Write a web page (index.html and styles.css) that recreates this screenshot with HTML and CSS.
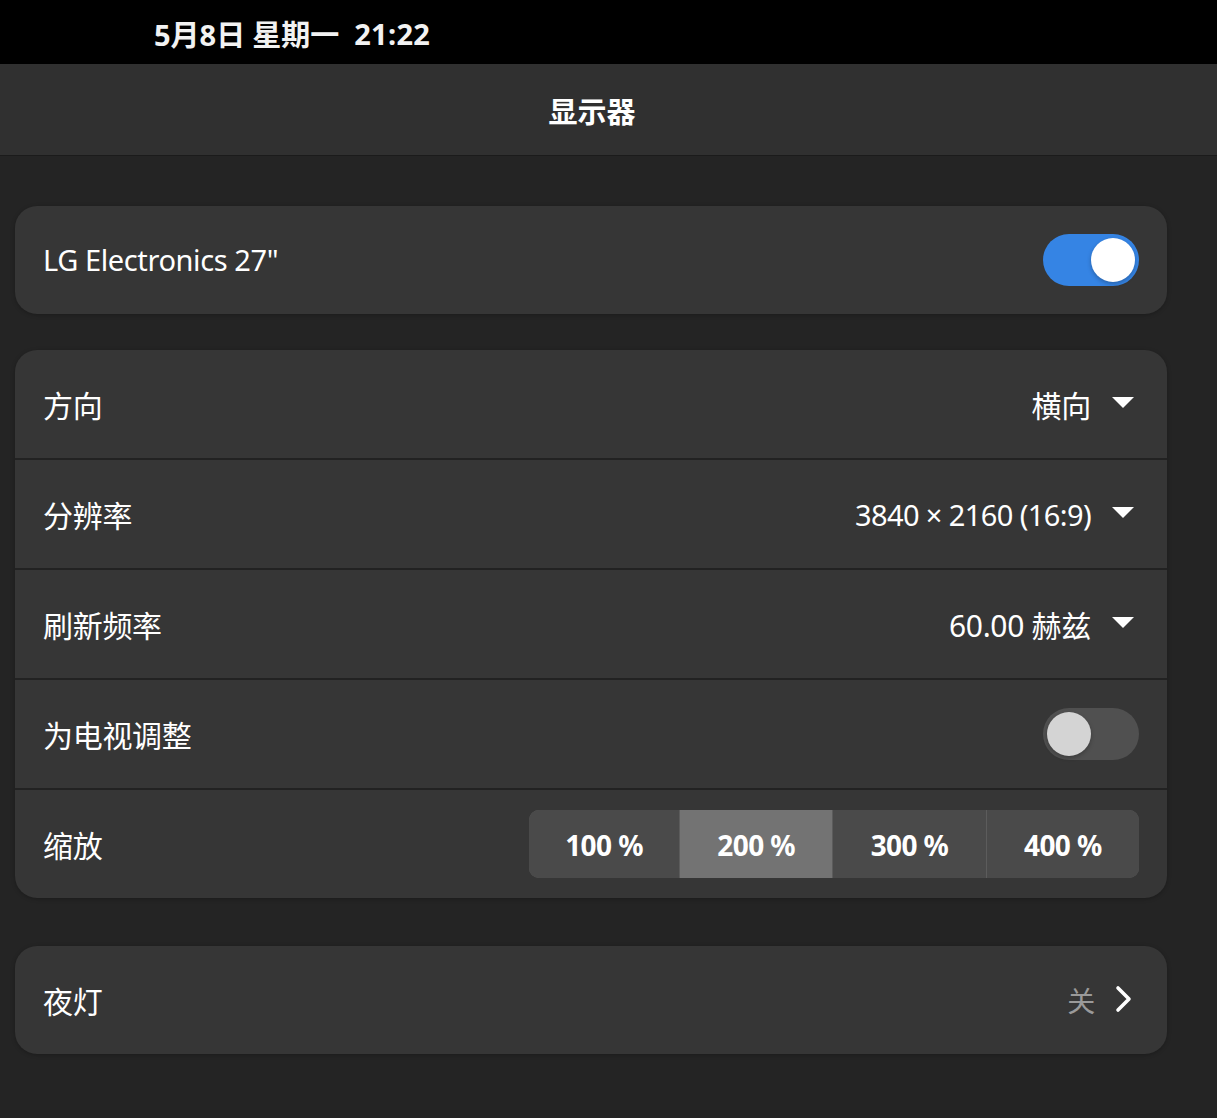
FILE: index.html
```html
<!DOCTYPE html>
<html lang="zh-CN">
<head>
<meta charset="utf-8">
<title>显示器</title>
<link rel="stylesheet" href="styles.css">
</head>
<body>
<div class="topbar"><span class="clock"><span class="date">5月8日</span><span class="day">星期一</span><span class="time">21:22</span></span></div>
<header class="header"><h1 class="title">显示器</h1></header>
<main class="content">
  <section class="card">
    <div class="row">
      <span class="label latin">LG Electronics 27"</span>
      <span class="switch on"><span class="knob"></span></span>
    </div>
  </section>

  <section class="card">
    <div class="row sep">
      <span class="label">方向</span>
      <span class="value">横向<span class="caret"></span></span>
    </div>
    <div class="row sep">
      <span class="label">分辨率</span>
      <span class="value latin">3840 × 2160 (16:9)<span class="caret"></span></span>
    </div>
    <div class="row sep">
      <span class="label">刷新频率</span>
      <span class="value">60.00 赫兹<span class="caret"></span></span>
    </div>
    <div class="row sep">
      <span class="label">为电视调整</span>
      <span class="switch"><span class="knob"></span></span>
    </div>
    <div class="row">
      <span class="label">缩放</span>
      <div class="segmented">
        <span class="seg">100 %</span>
        <span class="seg active">200 %</span>
        <span class="seg">300 %</span>
        <span class="seg">400 %</span>
      </div>
    </div>
  </section>

  <section class="card night">
    <div class="row">
      <span class="label">夜灯</span>
      <span class="value dim">关<svg class="chev" width="18" height="28" viewBox="0 0 18 28"><path d="M3 3 L14 14 L3 25" fill="none" stroke="#fff" stroke-width="3.6" stroke-linecap="round" stroke-linejoin="round"/></svg></span>
    </div>
  </section>
</main>
</body>
</html>
```

FILE: styles.css
```css
* { box-sizing: border-box; }
html, body { margin: 0; padding: 0; }
body {
  background: #242424;
  color: #ffffff;
  font-family: "Noto Sans", "Noto Sans CJK SC", sans-serif;
  width: 1217px;
  height: 1118px;
  overflow: hidden;
}
.topbar {
  height: 64px;
  background: #000;
  display: flex;
  align-items: center;
  padding-left: 154px;
}
.clock {
  display: flex;
  align-items: center;
  font-size: 29px;
  font-weight: 700;
  color: #f2f2f2;
  padding-top: 2px;
}
.day { margin-left: 7px; }
.time { margin-left: 15px; letter-spacing: 0.3px; }
.header {
  height: 92px;
  background: #303030;
  border-bottom: 1px solid #1b1b1b;
  display: flex;
  align-items: center;
  justify-content: center;
  padding-right: 33px;
}
.title {
  margin: 0;
  font-size: 29px;
  font-weight: 700;
}
.content {
  padding: 50px 50px 0 15px;
  display: flex;
  flex-direction: column;
}
.card {
  background: #363636;
  border-radius: 22px;
  box-shadow: 0 1px 4px rgba(0,0,0,0.25);
  margin-bottom: 36px;
  overflow: hidden;
}
.card.night { margin-top: 12px; }
.row {
  height: 108px;
  display: flex;
  align-items: center;
  justify-content: space-between;
  padding: 0 28px;
}
.row.sep {
  height: 110px;
  border-bottom: 2px solid #222222;
}
.label {
  font-size: 30px;
  letter-spacing: -0.3px;
  margin-top: -1px;
}
.label.latin { font-size: 29px; letter-spacing: -0.4px; }
.value {
  display: flex;
  align-items: center;
  font-size: 30px;
  letter-spacing: -0.3px;
}
.value.latin { font-size: 29px; letter-spacing: -0.6px; }
.caret {
  display: inline-block;
  width: 0;
  height: 0;
  border-left: 11px solid transparent;
  border-right: 11px solid transparent;
  border-top: 11px solid #ffffff;
  margin-left: 21px;
  margin-right: 5px;
  margin-top: -4px;
}
.value.dim { color: #9a9a9a; font-size: 28px; }
.chev { margin-left: 20px; margin-right: 6px; margin-top: -2px; }
.switch {
  width: 96px;
  height: 52px;
  border-radius: 26px;
  background: #505050;
  display: flex;
  align-items: center;
  padding: 0 4px;
}
.switch .knob {
  width: 44px;
  height: 44px;
  border-radius: 50%;
  background: #d4d4d4;
  box-shadow: 0 2px 4px rgba(0,0,0,0.25);
}
.switch.on {
  background: #3584e4;
  justify-content: flex-end;
}
.switch.on .knob { background: #ffffff; }
.segmented {
  display: flex;
  height: 68px;
  width: 610px;
  border-radius: 10px;
  overflow: hidden;
  background: #5c5c5c;
  gap: 1px;
}
.seg {
  flex: 1;
  display: flex;
  align-items: center;
  justify-content: center;
  background: #4a4a4a;
  font-size: 28px;
  font-weight: 700;
  letter-spacing: -0.6px;
  padding-top: 1px;
}
.seg:first-child { flex: 0 0 150px; }
.seg.active { background: #737373; }
```
